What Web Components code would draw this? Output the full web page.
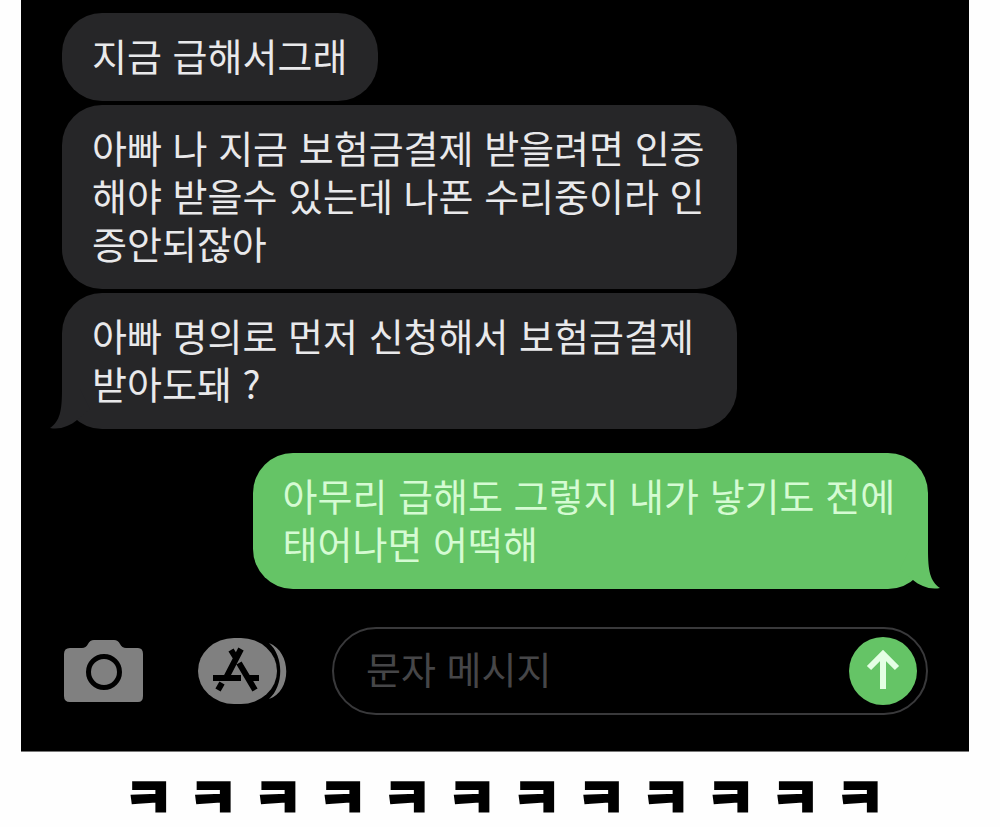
<!DOCTYPE html>
<html lang="ko">
<head>
<meta charset="utf-8">
<meta name="viewport" content="width=device-width, initial-scale=1">
<title>문자 메시지</title>
<style>
  body { margin: 0; background: #fefefe; font-family: "Noto Sans CJK KR", "Noto Sans", sans-serif; }
</style>
</head>
<body>
<chat-page>
  <chat-screen>
    <chat-bubble>지금 급해서그래</chat-bubble>
    <chat-bubble>아빠 나 지금 보험금결제 받을려면 인증해야 받을수 있는데 나폰 수리중이라 인증안되잖아</chat-bubble>
    <chat-bubble tail>아빠 명의로 먼저 신청해서 보험금결제 받아도돼 ?</chat-bubble>
    <chat-bubble sent tail>아무리 급해도 그렇지 내가 낳기도 전에 태어나면 어떡해</chat-bubble>
    <chat-composer slot="composer"></chat-composer>
  </chat-screen>
  <laugh-caption slot="caption">ㅋ ㅋ ㅋ ㅋ ㅋ ㅋ ㅋ ㅋ ㅋ ㅋ ㅋ ㅋ</laugh-caption>
</chat-page>

<script>
  const define = (name, html) => {
    const template = document.createElement('template');
    template.innerHTML = html;
    customElements.define(name, class extends HTMLElement {
      constructor() {
        super();
        this.attachShadow({ mode: 'open' }).append(template.content.cloneNode(true));
      }
    });
  };

  define('chat-page', `
    <style>
      :host { display: block; padding: 0 31px 0 21px; }
    </style>
    <main><slot></slot></main>
    <slot name="caption"></slot>
  `);

  define('chat-screen', `
    <style>
      :host { display: block; background: #000; border-bottom: 1px solid #777; padding: 13px 41px 36px; }
      .thread { display: flex; flex-direction: column; gap: 4px; }
    </style>
    <section class="thread"><slot></slot></section>
    <slot name="composer"></slot>
  `);

  define('chat-bubble', `
    <style>
      :host {
        display: block; position: relative; box-sizing: border-box;
        align-self: flex-start; max-width: 78%;
        padding: 18px 31px 22px 30px; border-radius: 40px;
        background: var(--bubble); --bubble: #262628;
        color: #e9e9eb; font-size: 38px; line-height: 48px;
      }
      :host([sent]) { --bubble: #65c466; color: #d5fbd3; align-self: flex-end; margin-top: 20px; }
      p { margin: 0; }
      svg { display: none; position: absolute; left: -12px; bottom: 0; width: 40px; height: 40px; fill: var(--bubble); }
      :host([tail]) svg { display: block; }
      :host([sent]) svg { left: auto; right: -12px; transform: scaleX(-1); }
    </style>
    <p><slot></slot></p>
    <svg viewBox="0 0 40 40" aria-hidden="true"><path d="M12 0C12 22 10 32 0 39C10 41 20 37 27 31L40 20L30 0Z"/></svg>
  `);

  define('chat-composer', `
    <style>
      :host { display: block; margin-top: 38px; }
      form { display: flex; align-items: center; gap: 44px; margin: 0; }
      button { border: 0; padding: 0; background: none; display: block; flex: none; }
      svg { display: block; }
      .tools { display: flex; align-items: center; gap: 54px; padding-left: 2px; }
      .field {
        flex: 1; min-width: 0; box-sizing: border-box; height: 88px;
        display: flex; align-items: center;
        border: 2px solid #39393b; border-radius: 44px; padding: 0 8px 0 32px;
      }
      input {
        flex: 1; min-width: 0; border: 0; padding: 0 0 8px; outline: 0; background: none;
        font: inherit; font-size: 38px; line-height: 48px; height: 56px; color: #e9e9eb;
      }
      input::placeholder { color: #464648; opacity: 1; }
    </style>
    <form>
      <div class="tools">
        <button type="button" aria-label="카메라">
          <svg width="80" height="62" viewBox="0 0 80 62">
            <path fill="#808080" d="M6 8H18Q22 8 24 4Q26 0 30 0H50Q54 0 56 4Q58 8 62 8H74Q79 8 79 14V56Q79 62 74 62H6Q0 62 0 56V14Q0 8 6 8Z"/>
            <circle cx="40" cy="32" r="15.5" fill="none" stroke="#000" stroke-width="5"/>
          </svg>
        </button>
        <button type="button" aria-label="앱">
          <svg width="90" height="66" viewBox="0 0 90 66">
            <path fill="#808080" d="M71 5C94 14 94 53 71 61C86 48 86 18 71 5Z"/>
            <rect width="79" height="66" rx="36" ry="33" fill="#808080"/>
            <g fill="none" stroke="#000" stroke-width="6" stroke-linecap="butt">
              <path d="M43 11L28 40M33 12L38 20M41 25L57 52M15 40H43M49 40H61M24 45L20 52"/>
            </g>
          </svg>
        </button>
      </div>
      <div class="field">
        <input type="text" placeholder="문자 메시지" aria-label="문자 메시지">
        <button type="submit" aria-label="보내기">
          <svg width="70" height="70" viewBox="0 0 70 70">
            <circle cx="35" cy="35" r="34" fill="#65c466"/>
            <path d="M35 53V19M21 32L35 18L49 32" fill="none" stroke="#e4ffe4" stroke-width="6"/>
          </svg>
        </button>
      </div>
    </form>
  `);

  define('laugh-caption', `
    <style>
      :host { display: block; }
      p {
        margin: 0; padding: 20px 0 0 18px; text-align: center; white-space: nowrap;
        font-family: "Liberation Sans", "Noto Sans CJK KR", sans-serif;
        font-size: 54px; line-height: 54px; font-weight: 900; color: #000;
        -webkit-text-stroke: 2px #000;
      }
    </style>
    <p><slot></slot></p>
  `);
</script>
</body>
</html>
